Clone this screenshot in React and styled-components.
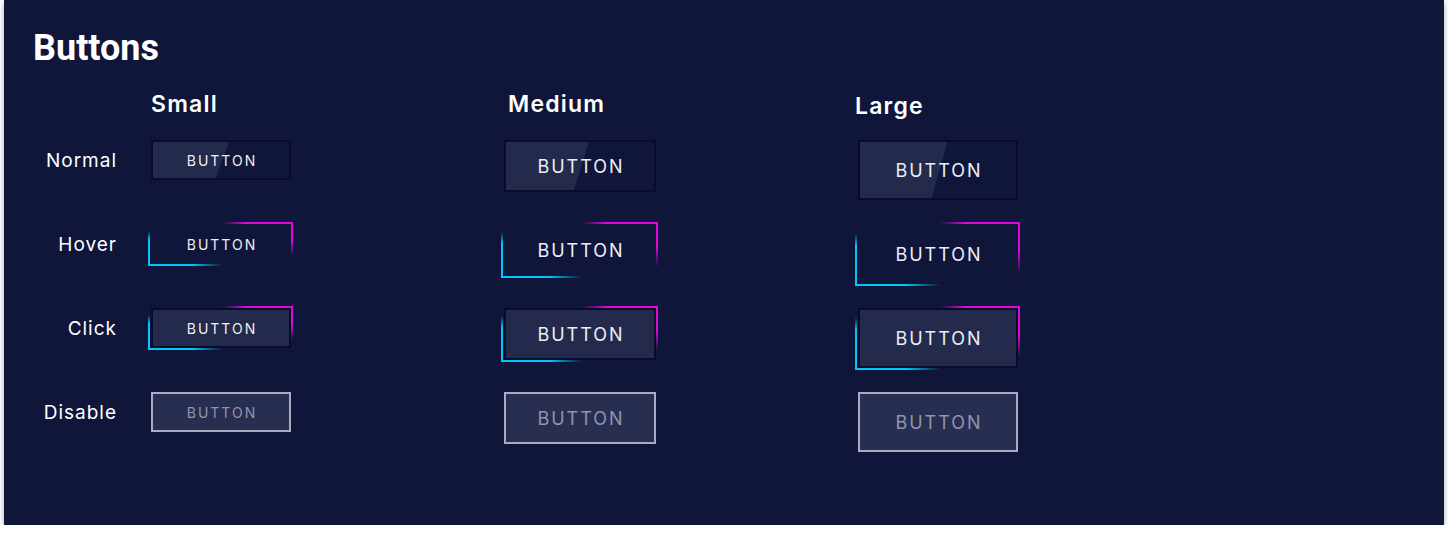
import React from "react";
import styled, { createGlobalStyle, css } from "styled-components";

const Global = createGlobalStyle`
  html, body { margin: 0; padding: 0; background: #ffffff; }
  body { font-family: "Inter", "Liberation Sans", sans-serif; }
`;

const Panel = styled.section`
  box-sizing: border-box;
  margin-left: 4px;
  width: 1440px;
  height: 525px;
  background: #10163a;
  box-shadow: 0 2px 6px rgba(0, 0, 0, 0.32);
  padding-top: 30px;
`;

const Title = styled.h1`
  margin: 0 0 0 29px;
  font-family: "Roboto", "Inter", sans-serif;
  font-weight: 700;
  font-size: 36px;
  line-height: 36px;
  color: #ffffff;
`;

const Grid = styled.div`
  display: grid;
  grid-template-columns: 147px 353px 354px 1fr;
  grid-template-rows: 48px repeat(4, 84px);
  align-items: start;
  margin-top: 26px;
`;

const ColHead = styled.div`
  font-family: "Inter", sans-serif;
  font-weight: 600;
  font-size: 23px;
  line-height: 23px;
  letter-spacing: 1.2px;
  color: #ffffff;
  margin-left: ${(p) => p.$shift || 0}px;
  margin-top: ${(p) => 1 + (p.$drop || 0)}px;
`;

const RowLabel = styled.div`
  height: 40px;
  display: flex;
  align-items: center;
  justify-content: flex-end;
  padding-right: 34px;
  font-family: "Inter", sans-serif;
  font-weight: 400;
  font-size: 19px;
  letter-spacing: 1px;
  color: #ffffff;
`;

const SIZES = {
  sm: { w: 140, h: 40, fs: 14 },
  md: { w: 152, h: 52, fs: 18 },
  lg: { w: 160, h: 60, fs: 18 },
};

const Glow = styled.span`
  position: relative;
  display: inline-flex;
  ${(p) =>
    p.$on &&
    css`
      &::before {
        content: "";
        position: absolute;
        top: -2px;
        right: -2px;
        width: 50%;
        height: 86%;
        background:
          linear-gradient(to right, rgba(222, 8, 222, 0), #de08de 32%) left top / 100% 2px no-repeat,
          linear-gradient(to bottom, #de08de 55%, rgba(222, 8, 222, 0)) right top / 2px 100% no-repeat;
        pointer-events: none;
      }
      &::after {
        content: "";
        position: absolute;
        bottom: -2px;
        left: -3px;
        width: 53%;
        height: 88%;
        background:
          linear-gradient(to bottom, rgba(0, 200, 250, 0), #00c8fa 25%) left top / 2px 100% no-repeat,
          linear-gradient(to right, #00c8fa 60%, rgba(0, 200, 250, 0)) left bottom / 100% 2px no-repeat;
        pointer-events: none;
      }
    `}
`;

const variants = {
  normal: css`
    border-color: #080c2b;
    background: #10163a;
    color: #eceef6;
    &::before {
      content: "";
      position: absolute;
      inset: 0;
      background: #232a4b;
      clip-path: polygon(0 0, 56% 0, 46% 100%, 0 100%);
    }
  `,
  hover: css`
    border-color: transparent;
    background: transparent;
    color: #eceef6;
  `,
  click: css`
    border-color: #080c2b;
    background: #232a4b;
    color: #eceef6;
  `,
  disable: css`
    border-color: #a9acc0;
    background: #282e50;
    color: #9094ae;
  `,
};

const Btn = styled.button`
  position: relative;
  box-sizing: border-box;
  width: ${(p) => SIZES[p.$size].w}px;
  height: ${(p) => SIZES[p.$size].h}px;
  padding: 0 0 0 2px;
  border: 2px solid transparent;
  display: flex;
  align-items: center;
  justify-content: center;
  font-family: "Inter", sans-serif;
  font-weight: 400;
  font-size: ${(p) => SIZES[p.$size].fs}px;
  letter-spacing: 2px;
  cursor: pointer;
  ${(p) => variants[p.$variant]}
`;

const BtnText = styled.span`
  position: relative;
  z-index: 1;
`;

const STATES = [
  { key: "normal", label: "Normal" },
  { key: "hover", label: "Hover" },
  { key: "click", label: "Click" },
  { key: "disable", label: "Disable" },
];

const COLS = [
  { size: "sm", name: "Small", shift: 0, drop: 0 },
  { size: "md", name: "Medium", shift: 4, drop: 0 },
  { size: "lg", name: "Large", shift: -3, drop: 2 },
];

function DemoButton({ size, variant }) {
  return (
    <Glow $on={variant === "hover" || variant === "click"}>
      <Btn $size={size} $variant={variant} disabled={variant === "disable"}>
        <BtnText>BUTTON</BtnText>
      </Btn>
    </Glow>
  );
}

export default function App() {
  return (
    <>
      <Global />
      <Panel>
        <Title>Buttons</Title>
        <Grid>
          <div />
          {COLS.map((c) => (
            <ColHead key={c.name} $shift={c.shift} $drop={c.drop}>
              {c.name}
            </ColHead>
          ))}
          {STATES.map((s) => (
            <React.Fragment key={s.key}>
              <RowLabel>{s.label}</RowLabel>
              {COLS.map((c) => (
                <div key={c.size}>
                  <DemoButton size={c.size} variant={s.key} />
                </div>
              ))}
            </React.Fragment>
          ))}
        </Grid>
      </Panel>
    </>
  );
}
